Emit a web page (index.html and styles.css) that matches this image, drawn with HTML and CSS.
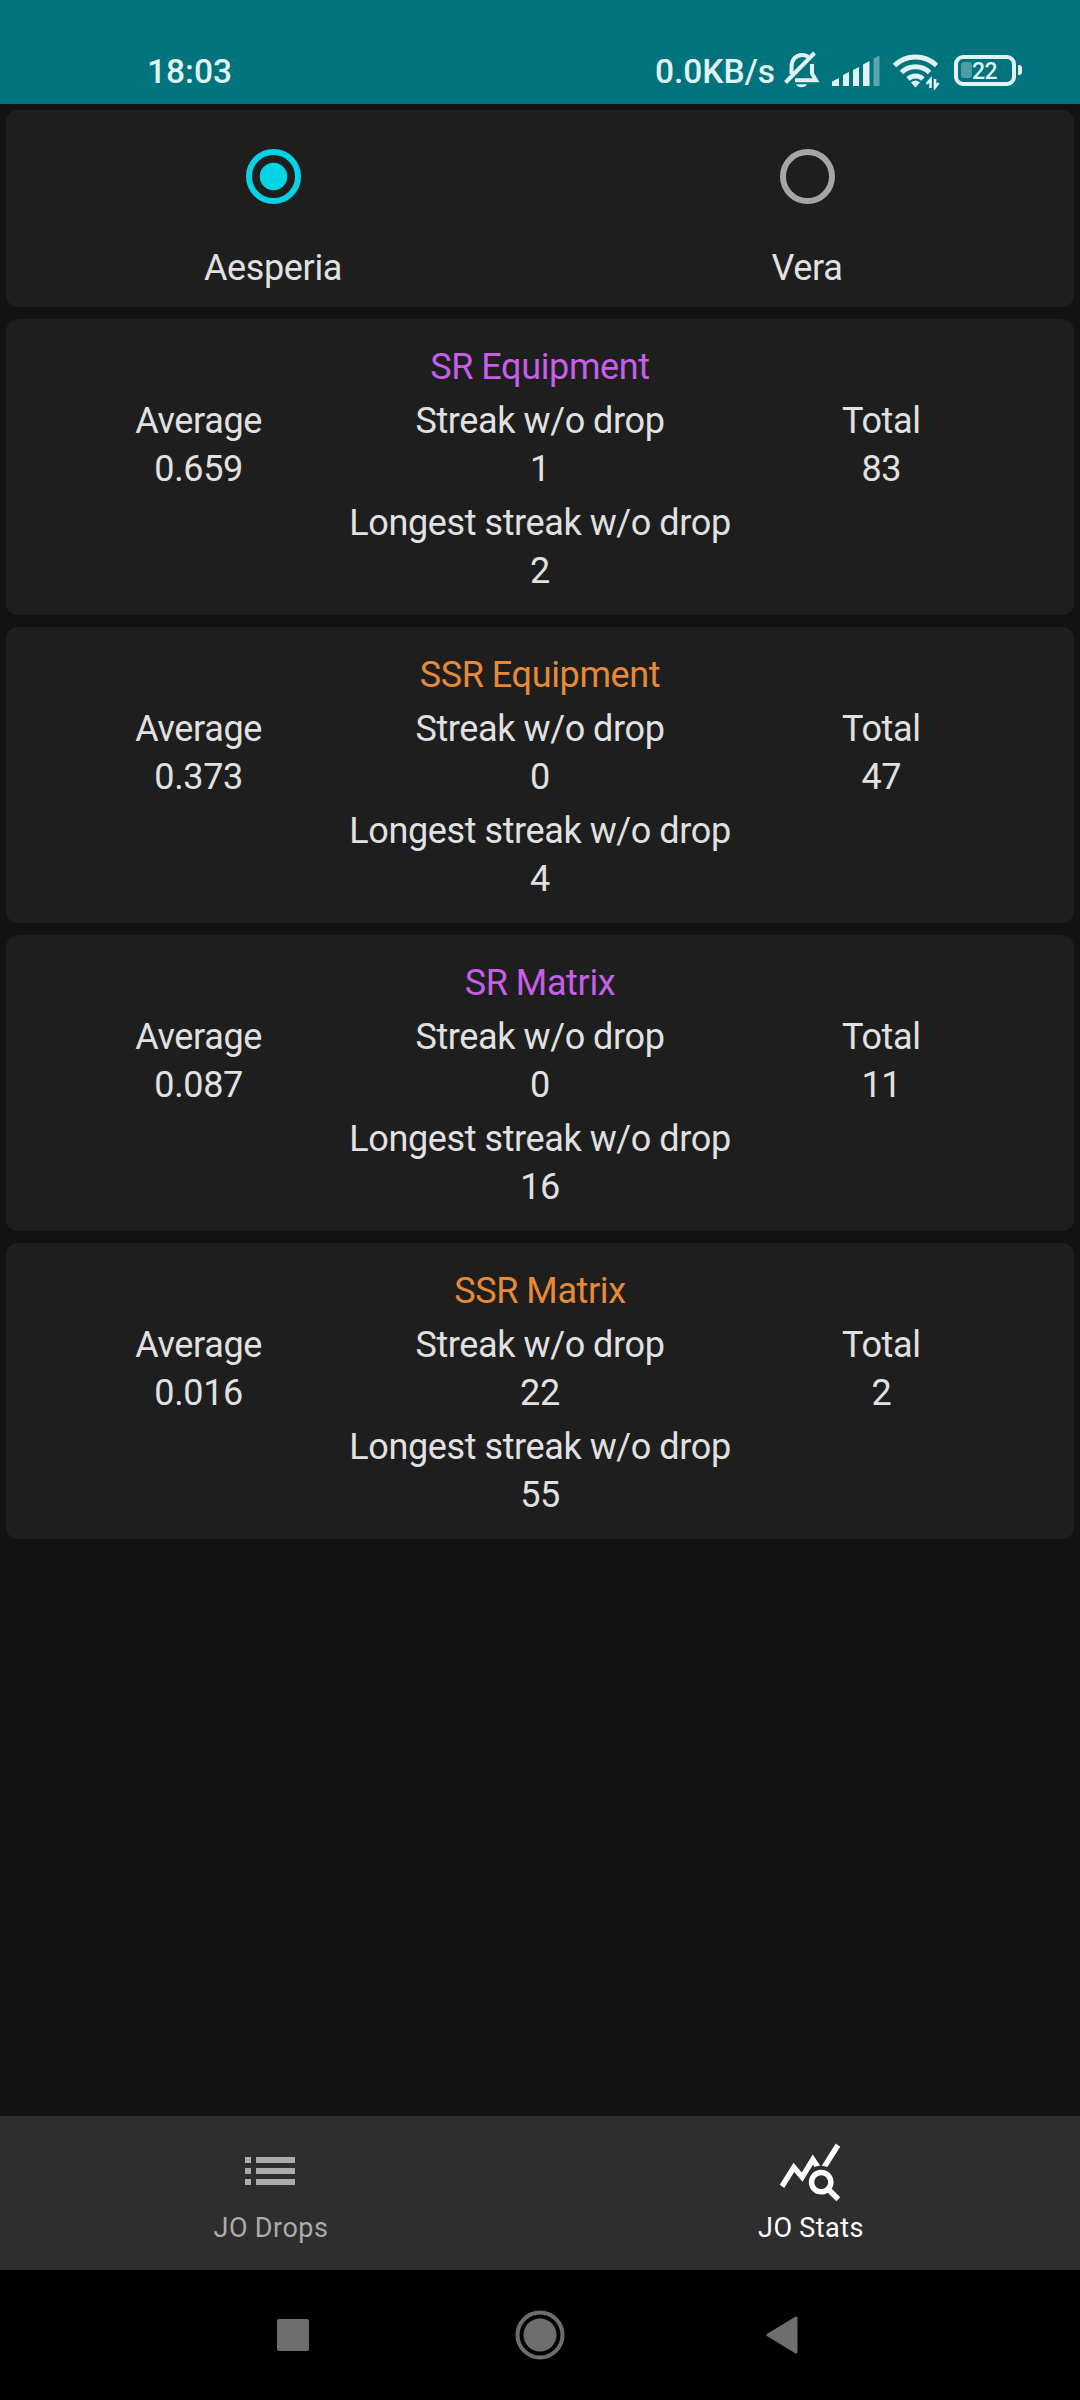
FILE: index.html
```html
<!DOCTYPE html>
<html lang="en">
<head>
<meta charset="utf-8">
<title>JO Stats</title>
<link rel="stylesheet" href="styles.css">
</head>
<body>
<header class="status">
  <span class="clock">18:03</span>
  <div class="status-right">
    <span class="speed">0.0KB/s</span>
    <svg class="bell" width="36" height="40" viewBox="0 0 36 40" fill="none" stroke="#e0f3f4" stroke-width="4">
      <path d="M1.500 32.500 30.500 3"/>
      <path d="M7.500 24V17c0-7.500 4.600-12 10.500-12 2.500 0 4.500.7 6.200 1.800"/>
      <path d="M28 14v9.500l4 6.800H11"/>
      <path d="M12 34.300h11c-1.200 4-9.800 4-11 0z" fill="#e0f3f4" stroke="none"/>
    </svg>
    <svg class="signal" width="48" height="32" viewBox="0 0 48 32" fill="#e0f3f4">
      <path d="M0 31v-4.500l7-3.500v8zM11 31V20l6-3v14zM21 31V15l6-3v19zM31 31V9.500l6.500-3.500v25z"/>
      <path d="M41.500 31V3.500l6-3v30.500z" opacity=".4"/>
    </svg>
    <svg class="wifi" width="48" height="38" viewBox="0 0 48 38" fill="none" stroke="#e0f3f4" stroke-width="5">
      <path d="M2.500 13.500a30 30 0 0 1 42 0"/>
      <path d="M9.500 20.500a20 20 0 0 1 28 0"/>
      <path d="M16 27a11 11 0 0 1 15 0"/>
      <path d="M19 30.500q4.500-4 9 0L23.500 35.500z" fill="#e0f3f4" stroke="none"/>
      <path d="M38.500 36v-8.500l-4 4.500M43 27v8.500l3.500-4.500" stroke-width="2.600"/>
    </svg>
    <div class="battery"><span class="battery-level"></span><span class="battery-text">22</span></div>
    <span class="battery-tip"></span>
  </div>
</header>

<main class="content">
  <section class="card regions">
    <label class="region"><span class="radio radio-on"></span><span>Aesperia</span></label>
    <label class="region"><span class="radio"></span><span>Vera</span></label>
  </section>

  <section class="card stats">
    <h2 class="title sr">SR Equipment</h2>
    <div class="row">
      <div>Average<br>0.659</div><div>Streak w/o drop<br>1</div><div>Total<br>83</div>
    </div>
    <div class="longest">Longest streak w/o drop<br>2</div>
  </section>
  <section class="card stats">
    <h2 class="title ssr">SSR Equipment</h2>
    <div class="row">
      <div>Average<br>0.373</div><div>Streak w/o drop<br>0</div><div>Total<br>47</div>
    </div>
    <div class="longest">Longest streak w/o drop<br>4</div>
  </section>
  <section class="card stats">
    <h2 class="title sr">SR Matrix</h2>
    <div class="row">
      <div>Average<br>0.087</div><div>Streak w/o drop<br>0</div><div>Total<br>11</div>
    </div>
    <div class="longest">Longest streak w/o drop<br>16</div>
  </section>
  <section class="card stats">
    <h2 class="title ssr">SSR Matrix</h2>
    <div class="row">
      <div>Average<br>0.016</div><div>Streak w/o drop<br>22</div><div>Total<br>2</div>
    </div>
    <div class="longest">Longest streak w/o drop<br>55</div>
  </section>
</main>

<nav class="tabs">
  <a class="tab">
    <svg width="66" height="66" viewBox="0 0 66 66" fill="#ababab">
      <path d="M8 19h6v6H8zM8 30h6v6H8zM8 41h6v6H8zM19 19h39v6H19zM19 30h39v6H19zM19 41h39v6H19z"/>
    </svg>
    <span>JO Drops</span>
  </a>
  <a class="tab tab-active">
    <svg width="66" height="66" viewBox="0 0 24 24" fill="#fff">
      <path d="M19.880 18.470c.44-.7.7-1.510.7-2.390 0-2.490-2.010-4.500-4.500-4.500s-4.500 2.010-4.500 4.500 2.010 4.500 4.490 4.500c.88 0 1.700-.26 2.390-.7L21.580 23 23 21.580l-3.120-3.110zm-3.800.11c-1.380 0-2.500-1.120-2.500-2.500s1.120-2.500 2.500-2.500 2.500 1.120 2.500 2.500-1.120 2.500-2.500 2.500zM15.720 10.080c-.74.02-1.450.18-2.100.45l-.55-.83-3.800 6.180-3.010-3.520-3.630 5.810L1 17l5-8 3 3.500L13 6l2.720 4.080zM18.310 10.580c-.64-.28-1.330-.45-2.050-.49L21.380 2 23 3.180l-4.690 7.400z"/>
    </svg>
    <span>JO Stats</span>
  </a>
</nav>

<footer class="system-nav">
  <svg width="32" height="32" viewBox="0 0 32 32"><rect width="32" height="32" rx="2" fill="#6e6e6e"/></svg>
  <svg class="home" width="50" height="50" viewBox="0 0 50 50"><circle cx="25" cy="25" r="22.500" fill="none" stroke="#6e6e6e" stroke-width="4"/><circle cx="25" cy="25" r="16.500" fill="#6e6e6e"/></svg>
  <svg width="32" height="38" viewBox="0 0 32 38"><path d="M2 19 30 2v34z" fill="#6e6e6e" stroke="#6e6e6e" stroke-width="3" stroke-linejoin="round"/></svg>
</footer>
</body>
</html>
```
FILE: styles.css
```css
* { box-sizing: border-box; }

body {
  margin: 0;
  height: 2400px;
  display: flex;
  flex-direction: column;
  background: #121212;
  color: #e1e1e1;
  font-family: Roboto, sans-serif;
  font-size: 36px;
  line-height: 48px;
  letter-spacing: -0.360px;
  word-spacing: -0.300px;
}

svg { display: block; flex: none; }

.status {
  height: 104px;
  padding: 48px 58px 0 147px;
  display: flex;
  justify-content: space-between;
  background: #00737c;
  color: #e0f3f4;
  font-size: 33.500px;
  font-weight: 500;
  letter-spacing: 0;
}
.clock, .speed { line-height: 48px; }
.status-right { display: flex; align-items: flex-start; }
.bell { margin: 2px 0 0 9px; }
.signal { margin: 7px 0 0 12px; }
.wifi { margin: 4px 0 0 12px; }
.battery {
  position: relative;
  width: 62px;
  height: 31px;
  margin: 7px 0 0 14px;
  border: 4px solid #e0f3f4;
  border-radius: 9px;
}
.battery-level {
  position: absolute;
  left: 3px;
  top: 3px;
  width: 11px;
  height: 16px;
  border-radius: 3px;
  background: #4d9da3;
}
.battery-text {
  position: absolute;
  left: 14px;
  top: 0;
  font-size: 23px;
  line-height: 25px;
  letter-spacing: -0.500px;
}
.battery-tip {
  width: 4px;
  height: 10px;
  margin: 17px 0 0 2px;
  border-radius: 0 3px 3px 0;
  background: #e0f3f4;
}

.content {
  flex: 1;
  padding: 6px;
  display: flex;
  flex-direction: column;
  gap: 12px;
}
.card { border-radius: 12px; background: #1e1e1e; text-align: center; }

.regions { height: 197px; display: flex; }
.region {
  flex: 1;
  padding-top: 39px;
  display: flex;
  flex-direction: column;
  align-items: center;
  gap: 40px;
}
.radio {
  width: 55px;
  height: 55px;
  border: 6px solid #a5a5a5;
  border-radius: 50%;
}
.radio-on {
  border-color: #03d3e4;
  background: radial-gradient(circle, #03d3e4 13.300px, transparent 14.200px);
}

.stats { height: 296px; padding: 24px 22px 0; }
.title { margin: 0; font-size: 36px; font-weight: 400; }
.sr { color: #c65ee8; }
.ssr { color: #e68a37; }
.row { margin: 6px 0; display: grid; grid-template-columns: repeat(3, 1fr); }

.tabs { height: 154px; display: flex; background: #2e2e2e; color: #ababab; }
.tab {
  flex: 1;
  padding-top: 22px;
  display: flex;
  flex-direction: column;
  align-items: center;
  font-size: 27px;
  line-height: 36px;
  letter-spacing: 0.500px;
  word-spacing: -0.500px;
}
.tab span { margin: 6px 0 0 2px; }
.tab-active { color: #fff; }

.system-nav {
  height: 130px;
  padding: 0 282px 0 277px;
  display: flex;
  align-items: center;
  justify-content: space-between;
  background: #000;
}
.home { margin-left: 4px; }
```
